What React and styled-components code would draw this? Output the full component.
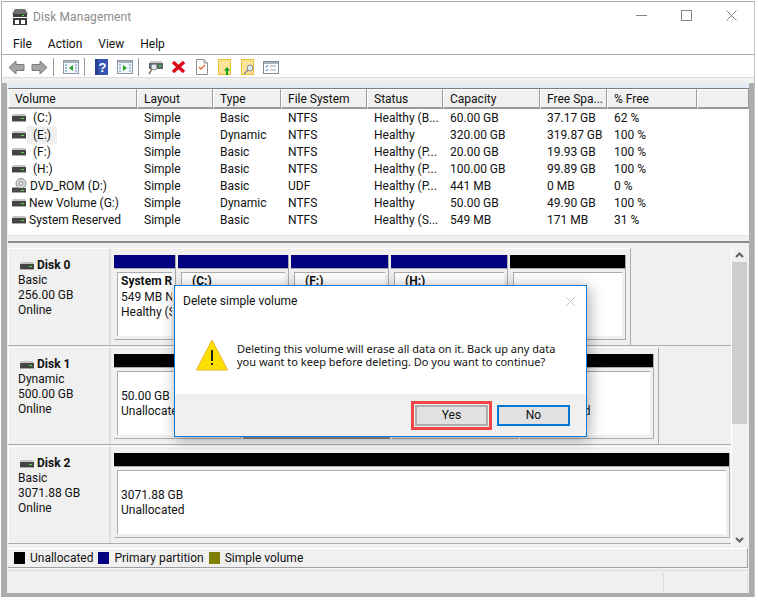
import React from 'react';
import styled, { createGlobalStyle } from 'styled-components';

const GlobalStyle = createGlobalStyle`
	html, body {
		margin: 0;
		padding: 0;
		background: #fff;
	}
	body {
		font-family: Roboto, 'Noto Sans', 'Liberation Sans', sans-serif;
		font-size: 12px;
		color: #111;
	}
	* {
		box-sizing: border-box;
	}
`;

const COLUMNS = [
	['Volume', 129],
	['Layout', 76],
	['Type', 68],
	['File System', 86],
	['Status', 76],
	['Capacity', 97],
	['Free Spa...', 67],
	['% Free', 90],
	['', 52],
];

const ROWS = [
	['(C:)', 'Simple', 'Basic', 'NTFS', 'Healthy (B...', '60.00 GB', '37.17 GB', '62 %'],
	['(E:)', 'Simple', 'Dynamic', 'NTFS', 'Healthy', '320.00 GB', '319.87 GB', '100 %'],
	['(F:)', 'Simple', 'Basic', 'NTFS', 'Healthy (P...', '20.00 GB', '19.93 GB', '100 %'],
	['(H:)', 'Simple', 'Basic', 'NTFS', 'Healthy (P...', '100.00 GB', '99.89 GB', '100 %'],
	['DVD_ROM (D:)', 'Simple', 'Basic', 'UDF', 'Healthy (P...', '441 MB', '0 MB', '0 %'],
	['New Volume (G:)', 'Simple', 'Dynamic', 'NTFS', 'Healthy', '50.00 GB', '49.90 GB', '100 %'],
	['System Reserved', 'Simple', 'Basic', 'NTFS', 'Healthy (S...', '549 MB', '171 MB', '31 %'],
];

const DISKS = [
	{
		name: 'Disk 0',
		lines: ['Basic', '256.00 GB', 'Online'],
		volumes: [
			{ width: 62, color: '#000080', title: 'System Reserved', lines: ['549 MB NTFS', 'Healthy (System)'] },
			{ width: 111, color: '#000080', title: '(C:)', lines: [] },
			{ width: 98, color: '#000080', title: '(F:)', lines: [] },
			{ width: 117, color: '#000080', title: '(H:)', lines: [] },
			{ width: 116, color: '#000', lines: [] },
		],
	},
	{
		name: 'Disk 1',
		lines: ['Dynamic', '500.00 GB', 'Online'],
		volumes: [
			{ width: 127, color: '#000', lines: ['50.00 GB', 'Unallocated'], free: true },
			{ width: 147, color: '#000', lines: [], selected: true },
			{ width: 126, color: '#000', lines: [] },
			{ width: 134, color: '#000', lines: ['\u00a0', 'Unallocated'], free: true },
		],
	},
	{
		name: 'Disk 2',
		lines: ['Basic', '3071.88 GB', 'Online'],
		volumes: [{ width: 616, color: '#000', lines: ['3071.88 GB', 'Unallocated'], free: true }],
	},
];

const DriveIcon = () => (
	<svg width='14' height='8' viewBox='0 0 14 8'>
		<path d='M1 0h12l1 2v5H0V2z' fill='#c4c4c4' />
		<rect x='0' y='2' width='14' height='5' fill='#454545' />
		<rect x='9' y='4' width='3' height='1' fill='#4fe04f' />
		<rect x='0' y='7' width='14' height='1' fill='#a8a8a8' />
	</svg>
);

const DvdIcon = () => (
	<svg width='15' height='15' viewBox='0 0 15 15'>
		<circle cx='9' cy='5.500' r='5' fill='#d8d8d8' stroke='#8c8c8c' />
		<circle cx='9' cy='5.500' r='1.800' fill='#fff' stroke='#888' />
		<rect x='0' y='10' width='14' height='4' fill='#4a4a4a' />
		<rect x='0' y='9' width='7' height='1' fill='#aaa' />
		<rect x='9' y='12' width='3' height='1' fill='#4fe04f' />
		<rect x='0' y='14' width='14' height='1' fill='#a8a8a8' />
	</svg>
);

const ArrowIcon = ({ flip }) => (
	<svg width='17' height='15' viewBox='0 0 17 15' style={flip ? { transform: 'scaleX(-1)' } : undefined}>
		<path d='M8 1L1 7.500 8 14v-3.500h8v-6H8z' fill='#a4a4a4' stroke='#7b7b7b' />
	</svg>
);

const PaneIcon = ({ side }) => (
	<svg width='16' height='14' viewBox='0 0 16 14'>
		<rect x='.5' y='.5' width='15' height='13' fill='#f4f7fa' stroke='#8b98a5' />
		<rect x='1' y='1' width='14' height='2' fill='#a9b3bd' />
		<path d={side === 'left' ? 'M10 5v6L6 8z' : 'M6 5v6l4-3z'} fill='#27a127' />
		<path d='M2 5h2M2 8h2M2 11h2M12 5h2M12 8h2M12 11h2' stroke='#5d88b8' />
	</svg>
);

const HelpIcon = () => (
	<svg width='13' height='16' viewBox='0 0 13 16'>
		<rect width='13' height='16' fill='#3654b4' />
		<rect width='3' height='16' fill='#25408f' />
		<text x='7.500' y='13' fontSize='13' fontWeight='700' textAnchor='middle' fill='#fff' fontFamily='Liberation Sans'>?</text>
	</svg>
);

const ConnectIcon = () => (
	<svg width='16' height='15' viewBox='0 0 16 15'>
		<rect x='1' y='3' width='14' height='6' fill='#5c6469' />
		<rect x='2' y='1' width='12' height='2' fill='#c8ccd0' />
		<rect x='11' y='5' width='2' height='2' fill='#3ad43a' />
		<circle cx='6' cy='7' r='3' fill='#dcebf5' stroke='#8a8a8a' />
		<path d='M4 9l-3 5' stroke='#8a7a5a' strokeWidth='1.500' />
	</svg>
);

const DeleteIcon = () => (
	<svg width='15' height='14' viewBox='0 0 15 14'>
		<path d='M2 2l11 10M13 2L2 12' stroke='#d80a16' strokeWidth='3.400' />
	</svg>
);

const PropertyIcon = () => (
	<svg width='12' height='16' viewBox='0 0 12 16'>
		<path d='M.5.5H8L11.500 4v11.500H.5z' fill='#fff' stroke='#8f8f8f' />
		<path d='M8 .5V4h3.500' fill='none' stroke='#8f8f8f' />
		<path d='M3 8l2 2 4-4' fill='none' stroke='#e8622a' strokeWidth='1.300' />
	</svg>
);

const FolderIcon = ({ children }) => (
	<svg width='13' height='16' viewBox='0 0 13 16'>
		<rect x='.5' y='.5' width='12' height='15' fill='#fbe49a' stroke='#e8c030' />
		{children}
	</svg>
);

const ListIcon = () => (
	<svg width='16' height='13' viewBox='0 0 16 13'>
		<rect x='.5' y='.5' width='15' height='12' fill='#fff' stroke='#7f8a94' />
		<rect x='1' y='1' width='14' height='2' fill='#a9b3bd' />
		<path d='M2.500 5l1 1 1.500-2M2.500 9l1 1 1.500-2' fill='none' stroke='#3a86c8' />
		<path d='M7 5h6M7 9h6' stroke='#9aa3ab' />
	</svg>
);

const AppIcon = () => (
	<svg width='16' height='16' viewBox='0 0 16 16'>
		<path d='M3 0h10l3 5H0z' fill='#6f6f6f' />
		<rect x='1' y='5' width='14' height='3' fill='#3d3d3d' />
		<rect x='10' y='6' width='2' height='1' fill='#4fe04f' />
		<rect x='1' y='9' width='14' height='7' fill='#3a3a3a' />
		<rect x='3' y='11' width='4' height='4' fill='#fff' />
		<rect x='9' y='11' width='4' height='4' fill='#fff' />
	</svg>
);

const WarningIcon = () => (
	<svg width='32' height='32' viewBox='0 0 32 32'>
		<path d='M16 1L31.500 31H.5z' fill='#fde000' stroke='#e6b422' />
		<rect x='15' y='11' width='2' height='11' fill='#222' />
		<rect x='15' y='24' width='2' height='2' fill='#222' />
	</svg>
);

const App = () => {
	return (
		<>
			<GlobalStyle />
			<Page>
				<TitleBar>
					<AppIcon />
					<Title>Disk Management</Title>
					<WindowButtons>
						<svg width='11' height='11' viewBox='0 0 11 11'>
							<path d='M0 5.500h11' stroke='#888' />
						</svg>
						<svg width='11' height='11' viewBox='0 0 11 11'>
							<rect x='.5' y='.5' width='10' height='10' fill='none' stroke='#888' />
						</svg>
						<svg width='11' height='11' viewBox='0 0 11 11'>
							<path d='M.5.5l10 10M10.500.5l-10 10' stroke='#888' />
						</svg>
					</WindowButtons>
				</TitleBar>
				<MenuBar>
					<MenuItem>File</MenuItem>
					<MenuItem>Action</MenuItem>
					<MenuItem>View</MenuItem>
					<MenuItem>Help</MenuItem>
				</MenuBar>
				<Toolbar>
					<ToolButton><ArrowIcon /></ToolButton>
					<ToolButton><ArrowIcon flip /></ToolButton>
					<ToolSeparator />
					<ToolButton><PaneIcon side='left' /></ToolButton>
					<ToolSeparator />
					<ToolButton><HelpIcon /></ToolButton>
					<ToolButton><PaneIcon side='right' /></ToolButton>
					<ToolSeparator />
					<ToolButton><ConnectIcon /></ToolButton>
					<ToolButton><DeleteIcon /></ToolButton>
					<ToolButton><PropertyIcon /></ToolButton>
					<ToolButton>
						<FolderIcon>
							<path d='M9 8l3 3.500h-2V16H8v-4.500H6z' fill='#10a010' />
						</FolderIcon>
					</ToolButton>
					<ToolButton>
						<FolderIcon>
							<circle cx='9' cy='9' r='3' fill='#dcebf5' stroke='#8a8a8a' />
							<path d='M7 11l-4 4' stroke='#8a8a8a' strokeWidth='1.500' />
						</FolderIcon>
					</ToolButton>
					<ToolButton><ListIcon /></ToolButton>
				</Toolbar>
				<ToolbarGap />
				<Client>
					<TopStrip />
					<VolumeList>
						<HeaderRow>
							{COLUMNS.map(([label, width]) => (
								<HeaderCell key={label || 'blank'} $width={width}>
									{label}
								</HeaderCell>
							))}
						</HeaderRow>
						{ROWS.map((row) => (
							<Row key={row[0]}>
								{row.map((value, i) => (
									<Cell key={i} $width={COLUMNS[i][1]}>
										{i === 0 ? (
											<VolumeName $short={value.startsWith('(')} $focused={value === '(E:)'}>
												{value.startsWith('DVD') ? <DvdIcon /> : <DriveIcon />}
												<span>{value}</span>
											</VolumeName>
										) : (
											value
										)}
									</Cell>
								))}
							</Row>
						))}
					</VolumeList>
					<Splitter />
					<LowerPane>
						<DiskList>
							{DISKS.map((disk) => (
								<DiskRow key={disk.name}>
									<DiskLabel>
										<DiskName>
											<DriveIcon />
											{disk.name}
										</DiskName>
										{disk.lines.map((line) => (
											<div key={line}>{line}</div>
										))}
									</DiskLabel>
									<VolumeStrip>
										{disk.volumes.map((volume, i) => (
											<VolumeBlock key={i} $width={volume.width} $selected={volume.selected}>
												<VolumeBar $color={volume.color} />
												<VolumeBody $free={volume.free}>
													{volume.title && (
														<VolumeTitle $indent={volume.title.startsWith('(')}>
															{volume.title}
														</VolumeTitle>
													)}
													{volume.lines.map((line, n) => (
														<div key={n}>{line}</div>
													))}
												</VolumeBody>
											</VolumeBlock>
										))}
									</VolumeStrip>
								</DiskRow>
							))}
						</DiskList>
						<ScrollBar>
							<svg width='9' height='6' viewBox='0 0 9 6'>
								<path d='M1 5l3.500-3.500L8 5' fill='none' stroke='#606060' strokeWidth='2' />
							</svg>
							<ScrollThumb />
							<svg width='9' height='6' viewBox='0 0 9 6'>
								<path d='M1 1l3.500 3.500L8 1' fill='none' stroke='#606060' strokeWidth='2' />
							</svg>
						</ScrollBar>
					</LowerPane>
					<Legend>
						<LegendSwatch $color='#000' />
						<LegendLabel>Unallocated</LegendLabel>
						<LegendSwatch $color='#000080' />
						<LegendLabel>Primary partition</LegendLabel>
						<LegendSwatch $color='#808000' />
						<LegendLabel>Simple volume</LegendLabel>
					</Legend>
					<StatusBar>
						<StatusCell $width={85} />
					</StatusBar>
				</Client>

				<Dialog>
					<DialogTitle>
						Delete simple volume
						<svg width='11' height='11' viewBox='0 0 11 11'>
							<path d='M.5.5l10 10M10.500.5l-10 10' stroke='#c8c8c8' />
						</svg>
					</DialogTitle>
					<DialogBody>
						<WarningIcon />
						<DialogText>
							Deleting this volume will erase all data on it. Back up any data
							<br />
							you want to keep before deleting. Do you want to continue?
						</DialogText>
					</DialogBody>
					<DialogFooter>
						<DialogButton $marked>Yes</DialogButton>
						<DialogButton $primary>No</DialogButton>
					</DialogFooter>
				</Dialog>
			</Page>
		</>
	);
};

const Page = styled.div`
	position: relative;
	width: 754px;
	height: 596px;
	margin: 1px 0 0 1px;
	border-top: 1px solid #adadad;
	border-left: 1px solid #adadad;
	border-right: 1px solid #c4c4c4;
	background: #fff;
	display: flex;
	flex-direction: column;
`;

const TitleBar = styled.div`
	height: 30px;
	display: flex;
	align-items: center;
	padding: 0 0 0 10px;
	flex-shrink: 0;
`;

const Title = styled.div`
	margin-left: 5px;
	color: #8b8b8b;
	font-size: 12px;
	letter-spacing: 0.1px;
`;

const WindowButtons = styled.div`
	margin-left: auto;
	display: flex;
	gap: 34px;
	padding: 0 17px 3px 0;
`;

const MenuBar = styled.div`
	height: 23px;
	display: flex;
	align-items: center;
	padding: 1px 0 0 11px;
	gap: 16px;
	border-bottom: 1px solid #adadad;
	flex-shrink: 0;
`;

const MenuItem = styled.div`
	font-size: 12px;
`;

const Toolbar = styled.div`
	height: 23px;
	display: flex;
	align-items: center;
	padding: 2px 0 0 3px;
	flex-shrink: 0;
	border-bottom: 1px solid #dcdcdc;
`;

const ToolButton = styled.div`
	width: 23px;
	display: flex;
	justify-content: center;
	flex-shrink: 0;
`;

const ToolSeparator = styled.div`
	width: 1px;
	height: 18px;
	background: #9a9a9a;
	margin: 0 5px 0 2px;
	flex-shrink: 0;
`;

const ToolbarGap = styled.div`
	height: 5px;
	background: #f0f0f0;
	flex-shrink: 0;
`;

const Client = styled.div`
	flex: 1;
	min-height: 0;
	display: flex;
	flex-direction: column;
	border-left: 5px solid #acacac;
	border-right: 5px solid #acacac;
	border-bottom: 4px solid #acacac;
	background: #f0f0f0;
	padding-left: 1px;
`;

const TopStrip = styled.div`
	height: 5px;
	background: #e3ecf5;
	flex-shrink: 0;
`;

const VolumeList = styled.div`
	height: 147px;
	background: #fff;
	border-top: 1px solid #7c7c7c;
	flex-shrink: 0;
`;

const HeaderRow = styled.div`
	display: flex;
	height: 20px;
`;

const HeaderCell = styled.div`
	width: ${({ $width }) => $width}px;
	padding: 2px 0 0 6px;
	line-height: 15px;
	background: #f0f0f0;
	border-top: 1px solid #fff;
	border-left: 1px solid #fff;
	border-right: 1px solid #9a9a9a;
	border-bottom: 2px solid #9a9a9a;
	white-space: nowrap;
	overflow: hidden;
`;

const Row = styled.div`
	display: flex;
	height: 17px;
	line-height: 19px;
`;

const Cell = styled.div`
	width: ${({ $width }) => $width}px;
	padding-left: 7px;
	white-space: nowrap;
`;

const VolumeName = styled.div`
	display: flex;
	align-items: center;
	margin-left: -3px;
	height: 17px;
	gap: ${({ $short }) => ($short ? 7 : 3)}px;
	span {
		line-height: 17px;
		padding: ${({ $focused }) => ($focused ? '1px 6px 0' : '1px 0 0')};
		background: ${({ $focused }) => ($focused ? '#f0f0f0' : 'transparent')};
		margin-left: ${({ $focused }) => ($focused ? '-6px' : '0')};
	}
`;

const Splitter = styled.div`
	height: 8px;
	flex-shrink: 0;
	background: #f0f0f0;
	border-bottom: 2px solid #8a8a8a;
	border-top: 1px solid #e4e4e4;
`;

const LowerPane = styled.div`
	height: 305px;
	display: flex;
	flex-shrink: 0;
	padding-top: 5px;
`;

const DiskList = styled.div`
	width: 724px;
	display: flex;
	flex-direction: column;
	gap: 1px;
`;

const DiskRow = styled.div`
	height: 98px;
	display: flex;
	border-bottom: 1px solid #acacac;
`;

const DiskLabel = styled.div`
	width: 103px;
	margin-right: 2px;
	padding: 9px 0 0 9px;
	line-height: 15px;
	border-top: 1px solid #fff;
	border-left: 1px solid #fff;
	border-right: 2px solid #dcdcdc;
	flex-shrink: 0;
`;

const DiskName = styled.div`
	display: flex;
	align-items: center;
	gap: 3px;
	margin-left: 2px;
	font-weight: 700;
	line-height: 15px;
`;

const VolumeStrip = styled.div`
	display: flex;
	align-self: flex-start;
	height: 97px;
	padding: 6px 4px 5px 1px;
	gap: 2px;
	border-top: 1px solid #fff;
	border-right: 1px solid #acacac;
`;

const VolumeBlock = styled.div`
	width: ${({ $width }) => $width}px;
	display: flex;
	flex-direction: column;
	border-right: 1px solid #acacac;
	border-bottom: ${({ $selected }) => ($selected ? '3px solid #8e8e8e' : '1px solid #acacac')};
`;

const VolumeBar = styled.div`
	height: 14px;
	background: ${({ $color }) => $color};
	border-bottom: 1px solid #acacac;
	flex-shrink: 0;
`;

const VolumeBody = styled.div`
	flex: 1;
	margin: 3px;
	background: #fff;
	border-top: 1px solid #acacac;
	border-left: 1px solid #acacac;
	padding: ${({ $free }) => ($free ? '17px 0 0 3px' : '0 0 0 3px')};
	line-height: 15px;
	overflow: hidden;
	white-space: nowrap;
`;

const VolumeTitle = styled.div`
	font-weight: 700;
	line-height: 17px;
	padding-left: ${({ $indent }) => ($indent ? '7px' : '0')};
`;

const ScrollBar = styled.div`
	width: 16px;
	margin-left: -1px;
	height: 300px;
	display: flex;
	flex-direction: column;
	align-items: center;
	background: #f0f0f0;
	border-left: 1px solid #fff;
	padding: 4px 0 5px;
	flex-shrink: 0;
`;

const ScrollThumb = styled.div`
	width: 15px;
	height: 162px;
	margin: 4px 0 auto;
	background: #cdcdcd;
`;

const Legend = styled.div`
	height: 20px;
	display: flex;
	align-items: center;
	padding-left: 6px;
	border-top: 1px solid #fff;
	border-right: 1px solid #a0a0a0;
	border-bottom: 1px solid #a0a0a0;
	flex-shrink: 0;
	margin-right: 1px;
`;

const LegendSwatch = styled.div`
	width: 11px;
	height: 12px;
	background: ${({ $color }) => $color};
	margin-right: 5px;
`;

const LegendLabel = styled.div`
	margin-right: 5px;
`;

const StatusBar = styled.div`
	flex: 1;
	margin-top: 2px;
	display: flex;
	justify-content: flex-end;
	border-top: 1px solid #dcdcdc;
`;

const StatusCell = styled.div`
	width: ${({ $width }) => $width}px;
	border-left: 1px solid #dcdcdc;
	border-right: 1px solid #dcdcdc;
	margin: 2px 1px 2px 0;
`;

const Dialog = styled.div`
	position: absolute;
	left: 172px;
	top: 283px;
	width: 413px;
	height: 152px;
	background: #fff;
	border: 1px solid #0078d7;
	box-shadow: 2px 2px 14px rgba(0, 0, 0, 0.35);
	display: flex;
	flex-direction: column;
`;

const DialogTitle = styled.div`
	height: 30px;
	padding: 0 10px 0 8px;
	display: flex;
	align-items: center;
	justify-content: space-between;
	font-size: 12px;
`;

const DialogBody = styled.div`
	flex: 1;
	display: flex;
	align-items: flex-start;
	padding: 23px 0 0 21px;
	gap: 9px;
`;

const DialogText = styled.div`
	font-family: 'Noto Sans', sans-serif;
	font-size: 11px;
	line-height: 13px;
	padding-top: 3px;
`;

const DialogFooter = styled.div`
	height: 42px;
	background: #f0f0f0;
	display: flex;
	align-items: center;
	justify-content: flex-end;
	gap: 9px;
	padding: 0 16px 0 0;
`;

const DialogButton = styled.button`
	width: 73px;
	height: 21px;
	padding: 0;
	margin: 0;
	font: inherit;
	color: #111;
	background: #e1e1e1;
	border: 2px solid ${({ $primary }) => ($primary ? '#0078d7' : '#adadad')};
	outline: ${({ $marked }) => ($marked ? '3px solid #f2454a' : 'none')};
	outline-offset: 1px;
`;

export default App;
